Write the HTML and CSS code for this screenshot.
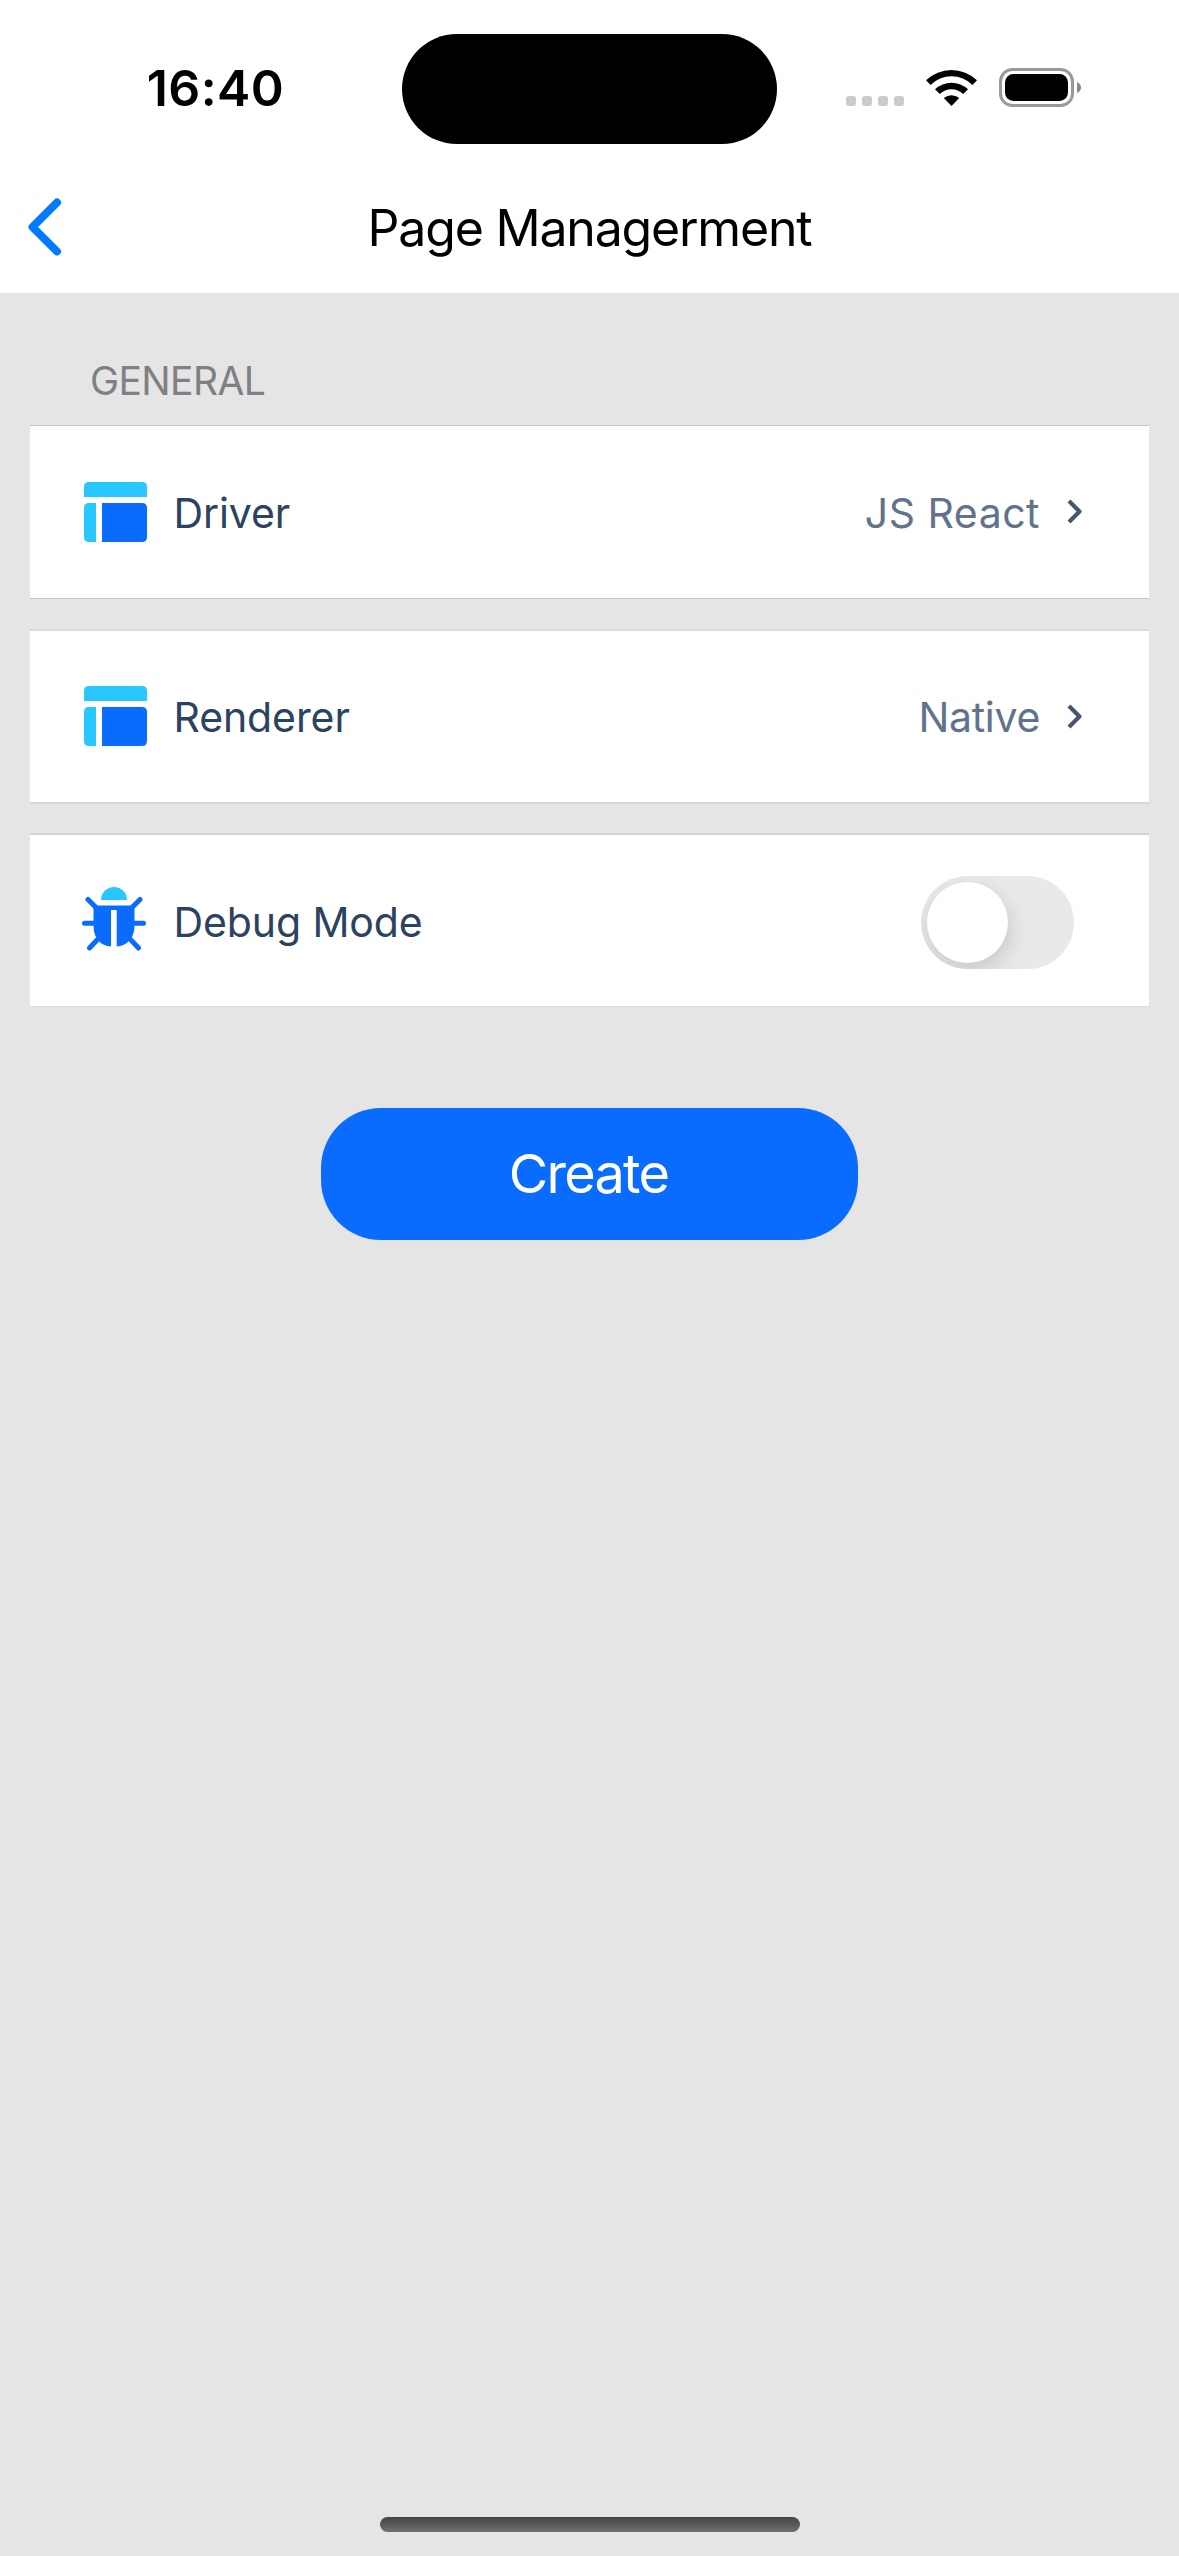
FILE: index.html
```
<!DOCTYPE html>
<html lang="en">
<head>
<meta charset="utf-8">
<title>Page Managerment</title>
<link rel="stylesheet" href="styles.css">
</head>
<body>
<header class="top">
  <div class="status">
    <div class="clock">16:40</div>
    <div class="island"></div>
    <div class="signals">
      <div class="dots"><i></i><i></i><i></i><i></i></div>
      <svg class="wifi" viewBox="0 0 51 38"><path d="M0 11.3A36.8 36.8 0 0 1 51 11.3L46.4 16A29.6 29.6 0 0 0 4.6 16ZM9 20.3A24 24 0 0 1 42 20.3L37.2 25A17 17 0 0 0 13.8 25ZM17.8 29.1A12 12 0 0 1 33.2 29.1L25.5 37Z"/></svg>
      <svg class="battery" viewBox="0 0 82 39"><rect x="1.5" y="1.5" width="72" height="36" rx="12" fill="none" stroke="#999" stroke-width="3"/><rect x="6" y="6" width="63" height="27" rx="8.5"/><path d="M78 14Q82 16 82 19.5T78 25Z" fill="#888"/></svg>
    </div>
  </div>
  <nav class="nav">
    <svg class="back" viewBox="0 0 34 58"><path d="M29 4.5L4.5 29L29 53.5"/></svg>
    <h1 class="title">Page Managerment</h1>
  </nav>
</header>
<main class="main">
  <h2 class="section">GENERAL</h2>
  <div class="cards">
    <div class="card card-first">
      <svg class="icon" viewBox="0 0 63 60"><path fill="#29c7ff" d="M0 15V5Q0 0 5 0H58Q63 0 63 5V15ZM12 60H5Q0 60 0 55V26Q0 21 5 21H12Z"/><path fill="#0a6cff" d="M18 21H58Q63 21 63 26V55Q63 60 58 60H18Z"/></svg>
      <span class="label">Driver</span>
      <span class="value value-wide">JS React</span>
      <svg class="go" viewBox="0 0 16 26"><path d="M2 2L12.5 12.5L2 23"/></svg>
    </div>
    <div class="card card-mid">
      <svg class="icon" viewBox="0 0 63 60"><path fill="#29c7ff" d="M0 15V5Q0 0 5 0H58Q63 0 63 5V15ZM12 60H5Q0 60 0 55V26Q0 21 5 21H12Z"/><path fill="#0a6cff" d="M18 21H58Q63 21 63 26V55Q63 60 58 60H18Z"/></svg>
      <span class="label">Renderer</span>
      <span class="value">Native</span>
      <svg class="go" viewBox="0 0 16 26"><path d="M2 2L12.5 12.5L2 23"/></svg>
    </div>
    <div class="card card-last">
      <svg class="icon bug" viewBox="0 0 64 64"><path fill="#29c7ff" d="M19 13A13 13 0 0 1 45 13Z"/><path fill="#0a6cff" d="M11.5 18.5H52.5V39C52.5 51 45 59 34.7 59.5V23H29V59.5C18.5 59 11.5 51 11.5 39Z"/><path fill="none" stroke="#0a6cff" stroke-width="5" stroke-linecap="round" d="M6 12.5L15 21.5M58 12.5L49 21.5M2.5 36.3H14M61.5 36.3H50M7.500 61L16 52M56.500 61L48 52"/></svg>
      <span class="label">Debug Mode</span>
      <span class="switch"><span class="knob"></span></span>
    </div>
  </div>
  <button class="create">Create</button>
</main>
<footer class="home"><div class="bar"></div></footer>
</body>
</html>
```
FILE: styles.css
```
* { box-sizing: border-box; }
body {
  margin: 0;
  width: 1179px;
  height: 2556px;
  display: flex;
  flex-direction: column;
  background: #e5e5e5;
  font-family: Inter, "Liberation Sans", sans-serif;
  color: #000;
}
h1, h2 { margin: 0; font-weight: 400; }
svg { display: block; flex: none; }
.top { background: #fff; height: 293px; }
.status { height: 177px; display: flex; align-items: center; padding-top: 1px; }
.clock {
  width: 402px;
  padding-left: 29px;
  text-align: center;
  font-size: 50px;
  font-weight: 600;
  line-height: 60px;
  letter-spacing: 0.4px;
  margin-bottom: 2px;
}
.island { width: 375px; height: 110px; border-radius: 55px; background: #000; }
.signals { display: flex; align-items: center; gap: 22px; padding: 0 0 3px 69px; }
.dots { display: flex; gap: 6px; padding-top: 26px; }
.dots i { width: 10px; height: 10px; border-radius: 3px; background: #cbcbcb; }
.wifi { width: 51px; height: 38px; }
.battery { width: 82px; height: 39px; }
.nav { height: 116px; display: grid; grid-template-columns: 120px 1fr 120px; align-items: center; }
.back { width: 34px; height: 58px; margin: -17px 0 0 28px; }
.back path { fill: none; stroke: #007aff; stroke-width: 8; stroke-linecap: round; stroke-linejoin: round; }
.title { font-size: 50px; line-height: 60px; letter-spacing: -1.2px; text-align: center; margin-top: -14px; }
.main { flex: 1; display: flex; flex-direction: column; padding: 0 30px; }
.section { height: 132px; padding: 64px 0 0 60px; font-size: 39px; line-height: 48px; letter-spacing: -0.6px; color: #808084; }
.cards { display: flex; flex-direction: column; gap: 30px; }
.card { display: flex; align-items: center; background: #fff; padding: 0 66px 0 54px; }
.card-first { height: 174px; border-top: 1px solid #c4c4c5; border-bottom: 1px solid #c4c4c5; }
.card-mid { height: 175px; border-top: 2px solid #dadada; border-bottom: 2px solid #d6d6d6; }
.card-mid .icon { margin-bottom: 1px; }
.card-last { height: 174px; margin-top: -1px; border-top: 2px solid #d6d6d6; border-bottom: 1px solid #dcdcdc; }
.icon { width: 63px; height: 60px; }
.bug { width: 64px; height: 64px; margin: 0 1px 3px -2px; }
.label { flex: 1; margin-left: 26.5px; padding-top: 2px; font-size: 41px; line-height: 50px; letter-spacing: -0.1px; color: #2b4260; }
.value { padding-top: 2px; font-size: 41px; line-height: 50px; letter-spacing: -0.3px; color: #61728b; }
.card-mid .label, .card-mid .value { padding-top: 1px; }
.value-wide { letter-spacing: 0.5px; }
.go { width: 16px; height: 26px; margin-left: 27px; }
.go path { fill: none; stroke: #475571; stroke-width: 4.2; stroke-linejoin: round; }
.switch { width: 153px; height: 93px; border-radius: 47px; background: #e9e9eb; padding: 6px; overflow: hidden; margin: 3px 9px 0 0; }
.knob { display: block; width: 81px; height: 81px; border-radius: 50%; background: #fff; box-shadow: 2px 8px 22px rgba(0,0,0,.15); }
.create {
  width: 537px;
  height: 132px;
  margin: 101px 0 0 291px;
  padding: 0 2px 0 0;
  border: 0;
  border-radius: 60px;
  background: #0a6cff;
  color: #fff;
  font: 400 54px/66px Inter, "Liberation Sans", sans-serif;
  letter-spacing: -1.7px;
}
.home { height: 39px; }
.bar { width: 420px; height: 15px; margin: 0 auto; border-radius: 8px; background: linear-gradient(#444, #707070); }
```
